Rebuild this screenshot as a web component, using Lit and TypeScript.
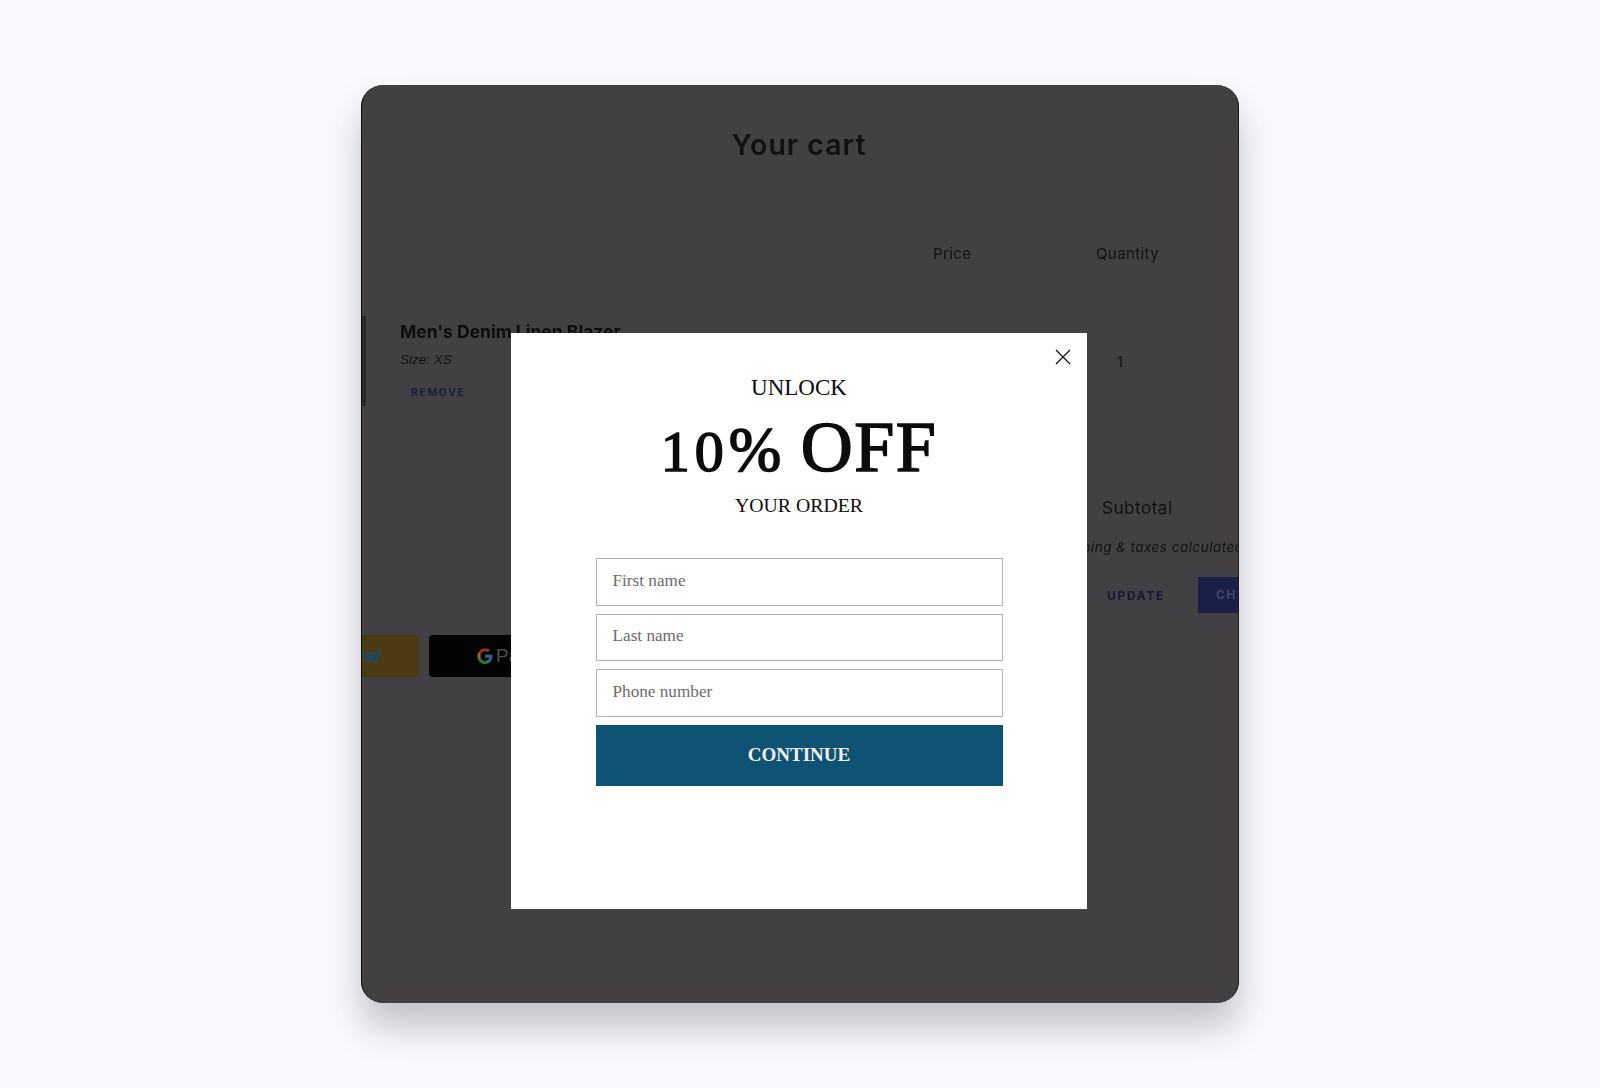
import { LitElement, html, css } from "lit";
import { customElement } from "lit/decorators.js";

@customElement("app-root")
export class AppRoot extends LitElement {
  static styles = css`
    :host { display: block; height: 1088px; background: #f9f9fe; overflow: hidden; position: relative; }
    .page { padding-top: 85px; padding-left: 361px; }
    .card {
      width: 878px; height: 918px; box-sizing: border-box; background: #424043; border-radius: 22px;
      box-shadow: 0 24px 36px rgba(50, 50, 60, 0.28);
      position: relative; overflow: visible;
    }
    .clip { position: absolute; inset: 0; border-radius: 22px; overflow: hidden; border-left: 1px solid #0c0c0e; border-right: 1px solid #1a1a1c; box-sizing: border-box; }
    .content { filter: blur(0.7px); font-family: Inter, "Liberation Sans", sans-serif; color: #111012; width: 877px; }
    h1 { margin: 40px 0 0 -3px; height: 40px; line-height: 40px; text-align: center; font-size: 28.5px; font-weight: 600; letter-spacing: 1px; }
    .cols { display: grid; grid-template-columns: 533px 163px 1fr; margin: 74px 0 0 38px; font-size: 15px; height: 30px; line-height: 30px; letter-spacing: 0.4px; }
    .item { position: relative; margin: 51px 0 0 38px; display: grid; grid-template-columns: 717px 1fr; height: 90px; }
    .thumb { position: absolute; left: -38px; top: -4px; width: 4px; height: 90px; background: #28272a; }
    .name { font-size: 17.5px; font-weight: 700; line-height: 24px; color: #0c0b0d; white-space: nowrap; }
    .size { font-size: 13.5px; font-style: italic; line-height: 18px; margin-top: 7px; font-family: "Liberation Sans", sans-serif; }
    .remove { font-size: 10.5px; font-weight: 700; letter-spacing: 1.6px; color: #1c1c40; margin: 15px 0 0 11px; line-height: 18px; }
    .qty { font-size: 15px; line-height: 84px; }
    .subtotal { margin: 86px 0 0 740px; font-size: 17.3px; line-height: 24px; letter-spacing: 0.4px; white-space: nowrap; }
    .ship { margin: 18px 0 0 690px; font-size: 13.5px; font-style: italic; line-height: 18px; white-space: nowrap; letter-spacing: 0.5px; }
    .actions { display: flex; align-items: center; margin: 21px 0 0 745px; height: 36px; white-space: nowrap; }
    .update { flex: none; width: 91px; font-size: 12px; font-weight: 700; letter-spacing: 1.7px; color: #171738; }
    .checkout { flex: none; background: #1a1f48; color: #46466a; font-size: 12px; font-weight: 700; letter-spacing: 1.7px; height: 36px; line-height: 36px; padding: 0 18px; }
    .pay { display: flex; gap: 10px; margin: 22px 0 0 -140px; height: 42px; }
    .paypal { flex: none; width: 197px; background: #4c3a12; border-radius: 3px; text-align: right; font: italic 700 19px/42px "Liberation Sans", sans-serif; color: #0b4d82; padding-right: 39px; box-sizing: border-box; }
    .gpay { flex: none; width: 197px; background: #030303; border-radius: 4px; display: flex; align-items: center; padding-left: 47px; box-sizing: border-box; gap: 2px; color: #4f4f51; font: 500 19px "Liberation Sans", sans-serif; }

    .modal {
      position: absolute; left: 150px; top: 248px; width: 576px; height: 576px; background: #fff;
      display: flex; flex-direction: column; align-items: center; font-family: "Liberation Serif", serif; color: #0c0c0c;
    }
    .close { position: absolute; right: 16px; top: 16px; width: 16px; height: 16px; }
    .unlock { margin-top: 41px; font-size: 23px; line-height: 28px; }
    .off { margin-top: 9px; height: 72px; line-height: 72px; font-size: 72px; white-space: nowrap; -webkit-text-stroke: 1.6px #0c0c0c; letter-spacing: 1.5px; }
    .off .old { font-size: 58px; letter-spacing: 5px; }
    .off .pct { font-size: 63px; letter-spacing: 0; }
    .your { margin-top: 8px; font-size: 19.8px; line-height: 28px; }
    form { margin-top: 39px; width: 407px; display: flex; flex-direction: column; }
    .field { height: 47.5px; box-sizing: border-box; border: 1px solid #b3b1b6; padding-left: 16px; margin-bottom: 8px; display: flex; align-items: center; color: #6c6c6c; font-size: 17.2px; padding-bottom: 2px; }
    .cta { height: 61px; background: #0e5373; color: #f1f1f1; font-size: 19px; font-weight: 700; display: flex; align-items: center; justify-content: center; box-sizing: border-box; }
  `;

  render() {
    return html`
      <div class="page">
        <div class="card">
          <div class="clip">
            <div class="content">
              <h1>Your cart</h1>
              <div class="cols"><span></span><span>Price</span><span>Quantity</span></div>
              <div class="item">
                <div class="thumb"></div>
                <div>
                  <div class="name">Men's Denim Linen Blazer</div>
                  <div class="size">Size: XS</div>
                  <div class="remove">REMOVE</div>
                </div>
                <div class="qty">1</div>
              </div>
              <div class="subtotal">Subtotal</div>
              <div class="ship">Shipping &amp; taxes calculated at checkout</div>
              <div class="actions"><span class="update">UPDATE</span><span class="checkout">CHECKOUT</span></div>
              <div class="pay">
                <div class="paypal">PayPal</div>
                <div class="gpay">
                  <svg width="18" height="18" viewBox="0 0 18 18" aria-hidden="true">
                    <path d="M16.5 9.2c0-.6-.1-1.1-.2-1.6H9v3.1h4.2a3.6 3.6 0 0 1-1.6 2.4v2h2.5c1.5-1.4 2.4-3.4 2.4-5.9z" fill="#345c94"/>
                    <path d="M9 17c2.1 0 3.9-.7 5.1-1.9l-2.5-2c-.7.5-1.6.8-2.6.8-2 0-3.7-1.4-4.3-3.2H2.1v2A8 8 0 0 0 9 17z" fill="#34733f"/>
                    <path d="M4.7 10.7a4.8 4.8 0 0 1 0-3.1v-2H2.1a8 8 0 0 0 0 7.2z" fill="#8c731e"/>
                    <path d="M9 4.2c1.1 0 2.1.4 2.9 1.1l2.2-2.2A8 8 0 0 0 2.1 5.6l2.6 2C5.3 5.7 7 4.2 9 4.2z" fill="#933527"/>
                  </svg>
                  <span>Pay</span>
                </div>
              </div>
            </div>
          </div>
          <div class="modal">
            <svg class="close" viewBox="0 0 16 16" aria-label="Close"><path d="M1 1l14 14M15 1L1 15" stroke="#111" stroke-width="1.3" fill="none"/></svg>
            <div class="unlock">UNLOCK</div>
            <div class="off"><span class="old">10</span><span class="pct">%</span> OFF</div>
            <div class="your">YOUR ORDER</div>
            <form>
              <div class="field">First name</div>
              <div class="field">Last name</div>
              <div class="field">Phone number</div>
              <div class="cta">CONTINUE</div>
            </form>
          </div>
        </div>
      </div>
    `;
  }
}
